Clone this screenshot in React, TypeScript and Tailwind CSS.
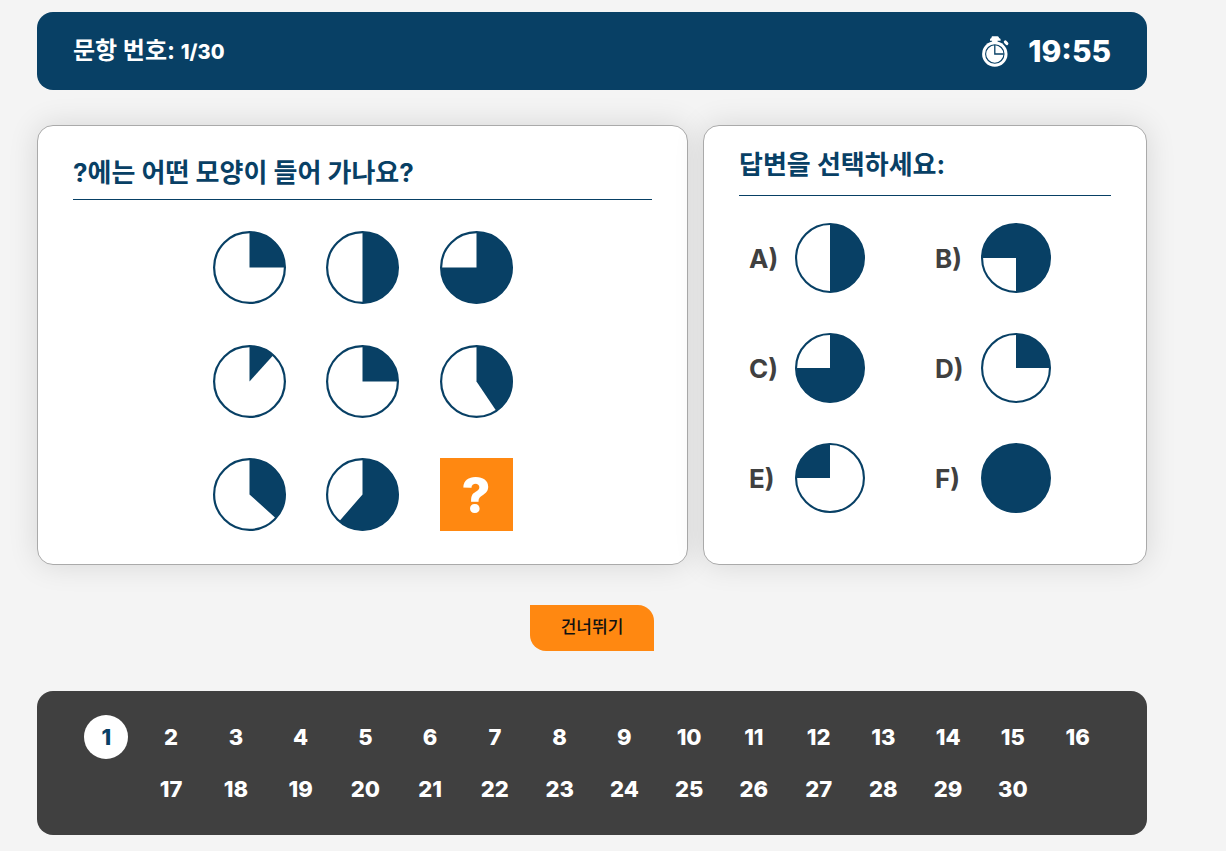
import { useState } from "react";

type PieProps = {
  // angles in degrees, clockwise from 12 o'clock
  start?: number;
  sweep: number;
  className?: string;
};

type Option = {
  label: string;
  start?: number;
  sweep: number;
};

const MATRIX = [90, 180, 270, 42, 90, 146, 132, 221];

const OPTIONS: Option[] = [
  { label: "A", sweep: 180 },
  { label: "B", start: 270, sweep: 270 },
  { label: "C", sweep: 270 },
  { label: "D", sweep: 90 },
  { label: "E", start: 270, sweep: 90 },
  { label: "F", sweep: 360 },
];

const TOTAL = 30;

function point(deg: number) {
  const rad = ((deg - 90) * Math.PI) / 180;
  return `${50 + 49 * Math.cos(rad)} ${50 + 49 * Math.sin(rad)}`;
}

function Pie({ start = 0, sweep, className }: PieProps) {
  const large = sweep > 180 ? 1 : 0;
  return (
    <svg viewBox="0 0 100 100" className={className} aria-hidden="true">
      <circle
        cx="50"
        cy="50"
        r="48.5"
        fill={sweep >= 360 ? "#084065" : "#fff"}
        stroke="#084065"
        strokeWidth="3"
      />
      {sweep < 360 && (
        <path
          d={`M50 50L${point(start)}A49 49 0 ${large} 1 ${point(start + sweep)}Z`}
          fill="#084065"
        />
      )}
    </svg>
  );
}

function StopwatchIcon() {
  return (
    <svg viewBox="0 0 28 31" className="h-[31px] w-7" aria-hidden="true">
      <path
        d="M10.2 0.3h5.2q1 0 1.4 1l.4 1h.4q1 .2 1 1.2v1.2H15.5V6.5h-5.4V4.7H8V3.5q0-1 1-1.2h.2l.4-1q.2-1 .6-1z"
        fill="#fff"
      />
      <path
        d="M23.4 6l1.4 1.5"
        stroke="#fff"
        strokeWidth="3.2"
        strokeLinecap="round"
      />
      <circle cx="12.8" cy="18" r="12.7" fill="#fff" />
      <circle cx="12.8" cy="18" r="9.2" fill="none" stroke="#084065" strokeWidth="1.1" />
      <path d="M12.8 9v9h9" fill="none" stroke="#084065" strokeWidth="1.3" />
    </svg>
  );
}

export default function App() {
  const [current, setCurrent] = useState(1);
  const [answer, setAnswer] = useState<string | null>(null);

  const goTo = (n: number) => {
    setCurrent(n);
    setAnswer(null);
  };

  return (
    <div className="min-h-screen bg-[#f4f4f4] pt-3 pr-[79px] pb-4 pl-[37px] font-['Inter','Noto_Sans_CJK_KR',sans-serif] text-[#084065]">
      <header className="flex h-[78px] items-center justify-between rounded-2xl bg-[#084065] px-9 font-bold text-white">
        <p className="text-2xl">
          문항 번호:{" "}
          <span className="text-[20px] font-extrabold">
            {current}/{TOTAL}
          </span>
        </p>
        <div className="flex items-center gap-[18px]">
          <StopwatchIcon />
          <time className="text-[30px] leading-10 font-extrabold">19:55</time>
        </div>
      </header>

      <main>
        <div className="mt-[35px] grid grid-cols-[651fr_444fr] gap-[15px]">
          <section className="rounded-2xl border border-[#aaa] bg-white px-[35px] pt-[29px] pb-[33px] shadow-[0_0_30px_rgba(0,0,0,0.12)]">
            <h1 className="border-b border-[#084065] pb-2 text-[26px] leading-9 font-bold">
              ?에는 어떤 모양이 들어 가나요?
            </h1>
            <div className="mx-auto mt-[31px] grid h-[300px] w-[300px] grid-cols-[repeat(3,73px)] content-between justify-between">
              {MATRIX.map((sweep, i) => (
                <Pie key={i} sweep={sweep} className="size-[73px]" />
              ))}
              <div className="flex size-[73px] items-center justify-center bg-[#ff8811] text-[50px] leading-none font-extrabold text-white">
                ?
              </div>
            </div>
          </section>

          <section className="rounded-2xl border border-[#aaa] bg-white px-[35px] pt-[21px] pb-[33px] shadow-[0_0_30px_rgba(0,0,0,0.12)]">
            <h2 className="border-b border-[#084065] pb-3 text-[26px] leading-9 font-bold">
              답변을 선택하세요:
            </h2>
            <div className="mt-[27px] grid grid-cols-2 gap-y-10">
              {OPTIONS.map((o) => (
                <button
                  key={o.label}
                  type="button"
                  aria-pressed={answer === o.label}
                  onClick={() => setAnswer(o.label)}
                  className="flex cursor-pointer items-center pl-2.5 text-left text-[26px] font-bold text-[#404040]"
                >
                  <span className="w-[46px]">{o.label})</span>
                  <Pie start={o.start} sweep={o.sweep} className="size-[70px]" />
                </button>
              ))}
            </div>
          </section>
        </div>

        <div className="my-10 flex justify-center">
          <button
            type="button"
            onClick={() => goTo(current < TOTAL ? current + 1 : 1)}
            className="h-[46px] cursor-pointer rounded-tr-2xl rounded-bl-2xl bg-[#ff8811] px-[31px] text-[17px] font-medium text-[#111]"
          >
            건너뛰기
          </button>
        </div>
      </main>

      <nav className="grid grid-cols-16 justify-items-center gap-y-2 rounded-2xl bg-[#404040] px-[37px] py-6">
        {Array.from({ length: TOTAL }, (_, i) => i + 1).map((n) => (
          <button
            key={n}
            type="button"
            onClick={() => goTo(n)}
            className={`size-11 cursor-pointer rounded-full text-[22px] font-extrabold ${
              n === current ? "bg-white text-[#084065]" : "text-white"
            } ${n === 17 ? "col-start-2" : ""}`}
          >
            {n}
          </button>
        ))}
      </nav>
    </div>
  );
}
